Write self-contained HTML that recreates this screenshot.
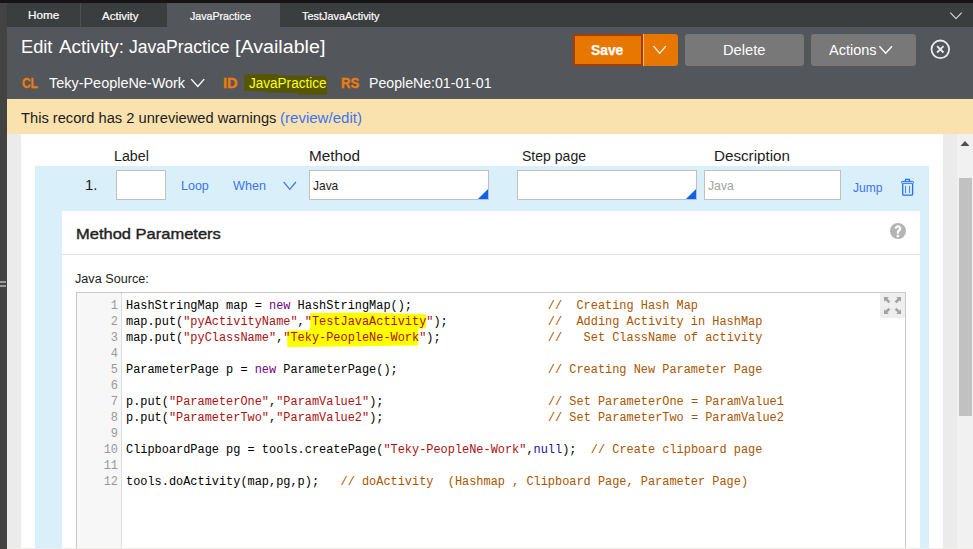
<!DOCTYPE html>
<html>
<head>
<meta charset="utf-8">
<title>Edit Activity: JavaPractice</title>
<style>
*{box-sizing:border-box;margin:0;padding:0}
html,body{width:973px;height:549px;overflow:hidden;background:#fff;font-family:"Liberation Sans",sans-serif;color:#1c1c1c}
.a{position:absolute}
.tx{position:absolute;white-space:nowrap;line-height:20px;transform-origin:0 50%;display:block}
.inp{position:absolute;top:170px;height:30px;background:#fff;border:1px solid #c2bfbc}
.tri{position:absolute;right:0;bottom:0;width:0;height:0;border-left:10px solid transparent;border-bottom:10px solid #0b63f3}
.btn{position:absolute;top:34px;height:32px;border-radius:3px;background:#787878}
#code,#lnums{font-family:"Liberation Mono",monospace;font-size:12px;line-height:16px;white-space:pre}
#lnums{left:77px;top:298px;width:41px;text-align:right;color:#999;transform-origin:100% 50%;transform:scaleX(0.9929)}
#code{left:126px;top:298px;color:#000;transform-origin:0 50%;transform:scaleX(0.9929)}
.k{color:#770088}.s{color:#aa1111}.c{color:#aa5500}.n{color:#221199}
</style>
</head>
<body>
<!-- chrome -->
<div class="a" style="left:0;top:0;width:973px;height:3px;background:#151515"></div>
<div class="a" style="left:0;top:3px;width:7px;height:546px;background:#434343"></div>
<div class="a" style="left:0;top:281px;width:6px;height:2px;background:#9a9a9a"></div>
<div class="a" style="left:0;top:285px;width:6px;height:2px;background:#9a9a9a"></div>
<div class="a" style="left:7px;top:3px;width:966px;height:24px;background:#3a3e3f"></div>
<div class="a" style="left:80px;top:3px;width:1px;height:24px;background:#4c5052"></div>
<div class="a" style="left:167px;top:3px;width:113px;height:24px;background:#53565a"></div>
<svg class="a" style="left:949px;top:11px" width="14" height="10" viewBox="0 0 14 10"><path d="M1.3 1.6 L7 7.6 L12.7 1.6" fill="none" stroke="#cfcfcf" stroke-width="1.3"/></svg>
<!-- header -->
<div class="a" style="left:7px;top:27px;width:966px;height:72px;background:#53565a"></div>
<svg class="a" style="left:190px;top:77px" width="16" height="12" viewBox="0 0 16 12"><path d="M1.2 2.1 L7.8 9.4 L14.2 2.1" fill="none" stroke="#fff" stroke-width="1.4"/></svg>
<svg class="a" style="left:240px;top:70px" width="92" height="28" viewBox="0 0 92 28"><path d="M4.2 4.8 L14 4.2 L22 3.9 L37 4.1 L38 5.4 L84 5.9 L87 7.6 L87 24.7 L58 24.7 L57 22.9 L26 22.4 L25 21.2 L4.2 20.8 Z" fill="#565600"/></svg>
<!-- buttons -->
<div class="btn" style="left:573px;width:70px;background:#e87700;border:2px solid #a63d05;border-radius:2px 0 0 2px"></div>
<div class="btn" style="left:643px;width:35px;background:#e87700;border-radius:0 3px 3px 0;border-left:1px solid #f4b97f"></div>
<svg class="a" style="left:652px;top:44px" width="16" height="12" viewBox="0 0 16 12"><path d="M1.6 2.2 L7.7 9.3 L13.8 2.2" fill="none" stroke="#fff" stroke-width="1.3"/></svg>
<div class="btn" style="left:685px;width:119px"></div>
<div class="btn" style="left:811px;width:105px"></div>
<svg class="a" style="left:878px;top:44px" width="16" height="12" viewBox="0 0 16 12"><path d="M1.4 2.2 L7.7 9.3 L14 2.2" fill="none" stroke="#fff" stroke-width="1.3"/></svg>
<svg class="a" style="left:929px;top:38px" width="23" height="23" viewBox="0 0 23 23"><circle cx="11.3" cy="11.3" r="8.8" fill="none" stroke="#ececec" stroke-width="1.8"/><path d="M8.1 8.1 L14.5 14.5 M14.5 8.1 L8.1 14.5" stroke="#ececec" stroke-width="1.9"/></svg>
<!-- warning -->
<div class="a" style="left:7px;top:99px;width:966px;height:35px;background:#f9e2ae"></div>
<!-- content frame -->
<div class="a" style="left:7px;top:134px;width:14px;height:415px;background:#ebebeb"></div>
<div class="a" style="left:943px;top:134px;width:14px;height:415px;background:#ebebeb"></div>
<div class="a" style="left:957px;top:134px;width:16px;height:415px;background:#f1f1f1"></div>
<svg class="a" style="left:960px;top:139.5px" width="10" height="7" viewBox="0 0 10 7"><path d="M0.5 6 L5 1 L9.5 6 Z" fill="#505050"/></svg>
<div class="a" style="left:959px;top:178px;width:13px;height:238px;background:#c1c1c1"></div>
<!-- step -->
<div class="a" style="left:35px;top:166px;width:894px;height:383px;background:#d9f0fb"></div>
<div class="inp" style="left:116px;width:50px"></div>
<svg class="a" style="left:282px;top:179px" width="16" height="13" viewBox="0 0 16 13"><path d="M1.7 3 L7.8 10.3 L13.9 3" fill="none" stroke="#4072f1" stroke-width="1.2"/></svg>
<div class="inp" style="left:309px;width:180px"><div class="tri"></div></div>
<div class="inp" style="left:517px;width:180px"><div class="tri"></div></div>
<div class="inp" style="left:704px;width:137px"></div>
<svg class="a" style="left:899px;top:177px" width="18" height="21" viewBox="0 0 18 21"><g fill="none" stroke="#256dfa" stroke-linejoin="round"><path d="M6.5 4.2 V2.4 H10.5 V4.2" stroke-width="1.2"/><rect x="2.5" y="4.4" width="12" height="1.9" rx="0.8" stroke-width="1"/><path d="M3.7 6.8 V17.2 Q3.7 18.2 4.7 18.2 H12.6 Q13.6 18.2 13.6 17.2 V6.8" stroke-width="1.3"/><path d="M6.6 8.9 V16 M10.6 8.9 V16" stroke-width="1" stroke-opacity="0.85"/></g></svg>
<!-- panel -->
<div class="a" style="left:62px;top:211px;width:858px;height:338px;background:#fff"></div>
<div class="a" style="left:62px;top:254px;width:858px;height:1px;background:#e2e2e2"></div>
<svg class="a" style="left:889px;top:222px" width="18" height="18" viewBox="0 0 18 18"><circle cx="9" cy="9" r="8" fill="#b4b4b4"/><path d="M6.7 6.7 A2.2 2.2 0 1 1 10.3 8.3 Q8.9 9.2 8.9 10.4 V11.7" fill="none" stroke="#fff" stroke-width="2.2"/><circle cx="8.9" cy="14.1" r="1.4" fill="#fff"/></svg>
<!-- editor -->
<div class="a" style="left:76px;top:292px;width:830px;height:257px;border:1px solid #c9c9c9;border-bottom:none;background:#fff"></div>
<div class="a" style="left:77px;top:293px;width:45px;height:256px;background:#f7f7f7;border-right:1px solid #ddd"></div>
<svg class="a" style="left:0;top:0" width="973" height="549" viewBox="0 0 973 549">
  <path d="M310.1 312.9 L362 312.6 L426.1 314.2 L426.1 328.3 L418.3 328.6 L418.3 345.5 L340 346.6 L287.3 347.1 L287.3 330.7 L310.1 330.3 Z" fill="#ffff00"/>
</svg>
<div class="a" style="left:880px;top:293px;width:25px;height:25px;background:#eeeeee"></div>
<svg class="a" style="left:883px;top:296px" width="19" height="19" viewBox="0 0 19 19"><g fill="#a2a2a2"><path d="M1 1 H5.8 L4.35 2.45 L7.35 5.45 L5.45 7.35 L2.45 4.35 L1 5.8 Z"/><path d="M18 1 V5.8 L16.55 4.35 L13.55 7.35 L11.65 5.45 L14.65 2.45 L13.2 1 Z"/><path d="M1 18 V13.2 L2.45 14.65 L5.45 11.65 L7.35 13.55 L4.35 16.55 L5.8 18 Z"/><path d="M18 18 H13.2 L14.65 16.55 L11.65 13.55 L13.55 11.65 L16.55 14.65 L18 13.2 Z"/></g></svg>
<div id="lnums" class="a">1
2
3
4
5
6
7
8
9
10
11
12</div>
<div id="code" class="a">HashStringMap map = <span class="k">new</span> HashStringMap();                   <span class="c">//  Creating Hash Map</span>
map.put(<span class="s">"pyActivityName"</span>,<span class="s">"TestJavaActivity"</span>);              <span class="c">//  Adding Activity in HashMap</span>
map.put(<span class="s">"pyClassName"</span>,<span class="s">"Teky-PeopleNe-Work"</span>);               <span class="c">//   Set ClassName of activity</span>

ParameterPage p = <span class="k">new</span> ParameterPage();                     <span class="c">// Creating New Parameter Page</span>

p.put(<span class="s">"ParameterOne"</span>,<span class="s">"ParamValue1"</span>);                       <span class="c">// Set ParameterOne = ParamValue1</span>
p.put(<span class="s">"ParameterTwo"</span>,<span class="s">"ParamValue2"</span>);                       <span class="c">// Set ParameterTwo = ParamValue2</span>

ClipboardPage pg = tools.createPage(<span class="s">"Teky-PeopleNe-Work"</span>,<span class="n">null</span>);  <span class="c">// Create clipboard page</span>

tools.doActivity(map,pg,p);   <span class="c">// doActivity  (Hashmap , Clipboard Page, Parameter Page)</span></div>
<div class="a" style="left:7px;top:548px;width:966px;height:1px;background:#f0ecec"></div>
<span id="t_home" class="tx" style="left:28.10px;top:5px;font-size:11px;font-weight:normal;color:#fff;transform:scaleX(1.0642);-webkit-text-stroke:0.2px #fff">Home</span>
<span id="t_act" class="tx" style="left:102.10px;top:6px;font-size:11px;font-weight:normal;color:#fff;transform:scaleX(1.0499);-webkit-text-stroke:0.2px #fff">Activity</span>
<span id="t_jp" class="tx" style="left:189.60px;top:6px;font-size:11px;font-weight:normal;color:#fff;transform:scaleX(0.9673);-webkit-text-stroke:0.2px #fff">JavaPractice</span>
<span id="t_tja" class="tx" style="left:301.50px;top:6px;font-size:11px;font-weight:normal;color:#fff;transform:scaleX(0.9905);-webkit-text-stroke:0.2px #fff">TestJavaActivity</span>
<span id="title1" class="tx" style="left:20.99px;top:37px;font-size:18px;font-weight:normal;color:#fff;transform:scaleX(1.0128);">Edit</span>
<span id="title2" class="tx" style="left:59.40px;top:37px;font-size:18px;font-weight:normal;color:#fff;transform:scaleX(1.0491);">Activity:</span>
<span id="title3" class="tx" style="left:129.40px;top:37px;font-size:18px;font-weight:normal;color:#fff;transform:scaleX(0.9745);">JavaPractice</span>
<span id="title4" class="tx" style="left:235.21px;top:37px;font-size:18px;font-weight:normal;color:#fff;transform:scaleX(1.0926);">[Available]</span>
<span id="cl" class="tx" style="left:21.60px;top:73px;font-size:14px;font-weight:bold;color:#ee7b0c;transform:scaleX(0.8529);-webkit-text-stroke:0.35px #ee7b0c">CL</span>
<span id="cls" class="tx" style="left:48.80px;top:73px;font-size:14px;font-weight:normal;color:#fff;transform:scaleX(1.0308);">Teky-PeopleNe-Work</span>
<span id="idl" class="tx" style="left:223.40px;top:73px;font-size:14px;font-weight:bold;color:#ee7b0c;transform:scaleX(1.0367);-webkit-text-stroke:0.4px #ee7b0c">ID</span>
<span id="idv" class="tx" style="left:249.10px;top:73px;font-size:14px;font-weight:normal;color:#ffff14;transform:scaleX(0.9669);">JavaPractice</span>
<span id="rsl" class="tx" style="left:340.80px;top:73px;font-size:14px;font-weight:bold;color:#ee7b0c;transform:scaleX(0.9314);-webkit-text-stroke:0.4px #ee7b0c">RS</span>
<span id="rsv" class="tx" style="left:368.89px;top:73px;font-size:14px;font-weight:normal;color:#fff;transform:scaleX(1.0097);">PeopleNe:01-01-01</span>
<span id="warn1" class="tx" style="left:20.90px;top:108px;font-size:14px;font-weight:normal;color:#1c1c1c;transform:scaleX(1.0486);">This record has 2 unreviewed warnings</span>
<span id="warn2" class="tx" style="left:280.10px;top:108px;font-size:14px;font-weight:normal;color:#4072f1;transform:scaleX(1.0744);">(review/edit)</span>
<span id="save" class="tx" style="left:591.10px;top:40px;font-size:14px;font-weight:bold;color:#fff;transform:scaleX(0.9875);-webkit-text-stroke:0.25px #fff">Save</span>
<span id="del" class="tx" style="left:723.15px;top:40px;font-size:14px;font-weight:normal;color:#fff;transform:scaleX(1.0483);">Delete</span>
<span id="acts" class="tx" style="left:829.10px;top:40px;font-size:14px;font-weight:normal;color:#fff;transform:scaleX(1.0368);">Actions</span>
<span id="l_label" class="tx" style="left:113.78px;top:146px;font-size:14px;font-weight:normal;color:#1c1c1c;transform:scaleX(1.0168);">Label</span>
<span id="l_method" class="tx" style="left:308.91px;top:146px;font-size:14px;font-weight:normal;color:#1c1c1c;transform:scaleX(1.0933);">Method</span>
<span id="l_step" class="tx" style="left:522.10px;top:146px;font-size:14px;font-weight:normal;color:#1c1c1c;transform:scaleX(1.0024);">Step page</span>
<span id="l_desc" class="tx" style="left:713.52px;top:146px;font-size:14px;font-weight:normal;color:#1c1c1c;transform:scaleX(1.0844);">Description</span>
<span id="num" class="tx" style="left:84.94px;top:175px;font-size:14px;font-weight:normal;color:#1c1c1c;transform:scaleX(1.0627);">1.</span>
<span id="loop" class="tx" style="left:180.80px;top:176px;font-size:12px;font-weight:normal;color:#4072f1;transform:scaleX(1.0399);">Loop</span>
<span id="when" class="tx" style="left:233.20px;top:176px;font-size:12px;font-weight:normal;color:#4072f1;transform:scaleX(1.0530);">When</span>
<span id="mval" class="tx" style="left:313.10px;top:176px;font-size:13.5px;font-weight:normal;color:#1c1c1c;transform:scaleX(0.8860);">Java</span>
<span id="dph" class="tx" style="left:708.10px;top:176px;font-size:13.5px;font-weight:normal;color:#a3a3a3;transform:scaleX(0.9066);">Java</span>
<span id="jump" class="tx" style="left:853.20px;top:178px;font-size:12px;font-weight:normal;color:#4072f1;transform:scaleX(1.0078);">Jump</span>
<span id="ptitle" class="tx" style="left:75.70px;top:224px;font-size:15px;font-weight:normal;color:#1f1f1f;transform:scaleX(1.0996);-webkit-text-stroke:0.4px #1f1f1f">Method Parameters</span>
<span id="jsrc" class="tx" style="left:75.30px;top:269px;font-size:13.7px;font-weight:normal;color:#1c1c1c;transform:scaleX(0.9231);">Java Source:</span>
</body>
</html>
